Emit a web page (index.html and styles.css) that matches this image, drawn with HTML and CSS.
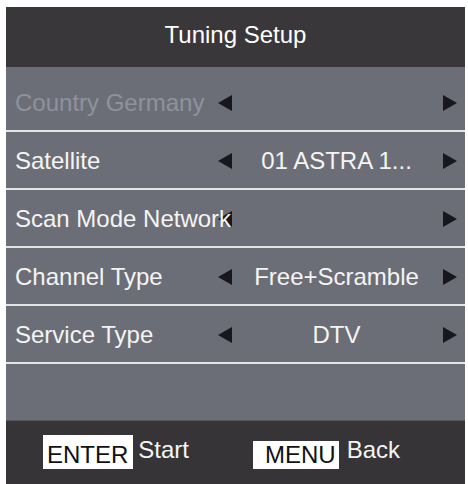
FILE: index.html
```html
<!DOCTYPE html>
<html>
<head>
<meta charset="utf-8">
<link rel="stylesheet" href="styles.css">
</head>
<body>
<div class="panel">
  <div class="header">Tuning Setup</div>
  <div class="row row-first disabled">
    <span class="label">Country Germany</span>
    <svg class="arrow arrow-left" viewBox="0 0 14 16"><polygon points="14,0 14,16 0,8"/></svg>
    <span class="value"></span>
    <svg class="arrow arrow-right" viewBox="0 0 14 16"><polygon points="0,0 0,16 14,8"/></svg>
  </div>
  <div class="sep"></div>
  <div class="row">
    <span class="label">Satellite</span>
    <svg class="arrow arrow-left" viewBox="0 0 14 16"><polygon points="14,0 14,16 0,8"/></svg>
    <span class="value">01 ASTRA 1...</span>
    <svg class="arrow arrow-right" viewBox="0 0 14 16"><polygon points="0,0 0,16 14,8"/></svg>
  </div>
  <div class="sep"></div>
  <div class="row">
    <span class="label">Scan Mode Network</span>
    <svg class="arrow arrow-left" viewBox="0 0 14 16"><polygon points="14,0 14,16 0,8"/></svg>
    <span class="value"></span>
    <svg class="arrow arrow-right" viewBox="0 0 14 16"><polygon points="0,0 0,16 14,8"/></svg>
  </div>
  <div class="sep"></div>
  <div class="row">
    <span class="label">Channel Type</span>
    <svg class="arrow arrow-left" viewBox="0 0 14 16"><polygon points="14,0 14,16 0,8"/></svg>
    <span class="value">Free+Scramble</span>
    <svg class="arrow arrow-right" viewBox="0 0 14 16"><polygon points="0,0 0,16 14,8"/></svg>
  </div>
  <div class="sep"></div>
  <div class="row">
    <span class="label">Service Type</span>
    <svg class="arrow arrow-left" viewBox="0 0 14 16"><polygon points="14,0 14,16 0,8"/></svg>
    <span class="value">DTV</span>
    <svg class="arrow arrow-right" viewBox="0 0 14 16"><polygon points="0,0 0,16 14,8"/></svg>
  </div>
  <div class="sep"></div>
  <div class="row row-empty"></div>
  <div class="footer">
    <div class="hint hint-enter">
      <span class="key key-enter">ENTER</span>
      <span class="hint-text">Start</span>
    </div>
    <div class="hint hint-menu">
      <span class="key key-menu">MENU</span>
      <span class="hint-text hint-back">Back</span>
    </div>
  </div>
</div>
</body>
</html>
```

FILE: styles.css
```css
html, body {
  margin: 0;
  padding: 0;
  background: #ffffff;
}

body {
  font-family: "Liberation Sans", Arial, sans-serif;
  font-size: 24px;
  color: #f4f4f4;
}

.panel {
  width: 459px;
  margin: 7px 0 0 6px;
  display: flex;
  flex-direction: column;
  background: #6c6e77;
}

.header {
  height: 60px;
  background: #3a373b;
  display: flex;
  align-items: center;
  justify-content: center;
  padding-bottom: 4px;
  box-sizing: border-box;
  color: #ffffff;
}

.row {
  height: 56px;
  box-sizing: border-box;
  display: grid;
  grid-template-columns: 203px 14px 1fr 16px;
  align-items: center;
  padding: 2px 8px 0 9px;
  background: #6c6e77;
  white-space: nowrap;
}

.row-first {
  height: 63px;
  padding-top: 8px;
}

.row-empty {
  display: block;
}

.label {
  grid-column: 1;
  grid-row: 1;
  position: relative;
  z-index: 1;
  overflow: visible;
}

.disabled .label {
  color: #8f929c;
}

.arrow {
  width: 14px;
  height: 16px;
  fill: #17171d;
  grid-row: 1;
}

.arrow-left {
  grid-column: 2;
}

.arrow-right {
  grid-column: 4;
  justify-self: end;
}

.value {
  grid-column: 3;
  grid-row: 1;
  text-align: center;
}

.sep {
  height: 2px;
  background: #e4e4e7;
}

.footer {
  height: 64px;
  background: #363437;
  border-top: 1px solid #57565a;
  box-sizing: border-box;
  display: flex;
  align-items: flex-start;
  padding-left: 37px;
}

.hint {
  display: flex;
  align-items: flex-start;
}

.hint-enter {
  width: 210px;
}

.key {
  background: #ffffff;
  color: #111111;
  box-sizing: border-box;
  line-height: 28px;
}

.key-enter {
  margin-top: 14px;
  height: 34px;
  padding: 6px 5px 0 4px;
}

.key-menu {
  margin-top: 20px;
  height: 28px;
  padding: 0 3px 0 12px;
}

.hint-text {
  margin-top: 16px;
  margin-left: 5px;
  line-height: 26px;
  color: #f4f4f4;
}

.hint-back {
  margin-left: 8px;
}
```
